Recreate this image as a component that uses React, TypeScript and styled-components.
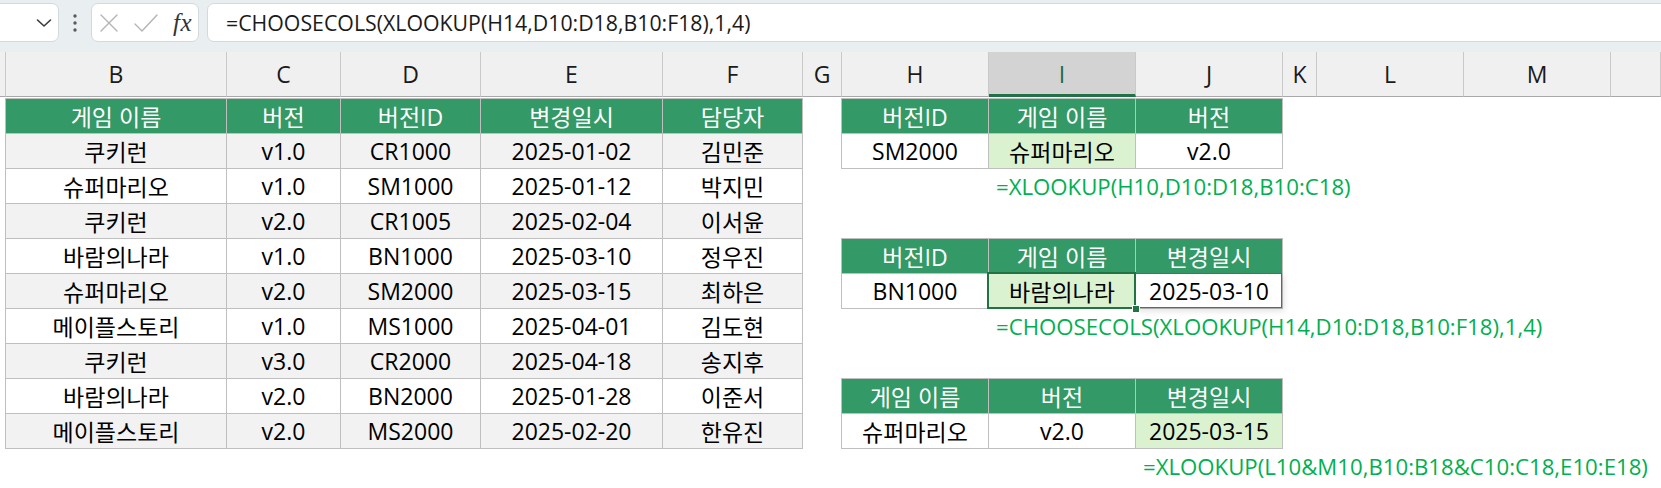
import React from 'react';
import styled, { createGlobalStyle, css } from 'styled-components';

const GlobalStyle = createGlobalStyle`
  html, body { margin: 0; padding: 0; background: #ffffff; }
  body {
    width: 1661px;
    height: 488px;
    overflow: hidden;
    font-family: "Open Sans", "Noto Sans CJK KR", sans-serif;
  }
`;

const COL_WIDTHS = [6, 221, 114, 140, 182, 140, 39, 147, 147, 147, 34, 147, 147];
const TEMPLATE = COL_WIDTHS.map((w) => `${w}px`).join(' ') + ' 1fr';
const LETTERS = ['', 'B', 'C', 'D', 'E', 'F', 'G', 'H', 'I', 'J', 'K', 'L', 'M', ''];
const SELECTED_LETTER = 'I';

/* ---------- formula bar ---------- */

const Bar = styled.div`
  display: flex;
  align-items: flex-start;
  height: 52px;
  box-sizing: border-box;
  padding-top: 3px;
  background: #e9eef1;
  overflow: hidden;
`;

const boxLook = css`
  height: 39px;
  box-sizing: border-box;
  background: #ffffff;
  border: 1px solid #d4d9dd;
  border-radius: 7px;
`;

const NameBox = styled.div`
  ${boxLook};
  flex: none;
  width: 72px;
  margin-left: -13px;
  display: flex;
  align-items: center;
  justify-content: flex-end;
  padding-right: 6px;
  color: #3a3a3a;
`;

const Kebab = styled.div`
  flex: none;
  width: 32px;
  height: 39px;
  display: flex;
  align-items: center;
  justify-content: center;
  color: #5a5a5a;
`;

const FxBox = styled.div`
  ${boxLook};
  flex: none;
  width: 108px;
  display: flex;
  align-items: center;
  padding-left: 7px;
  gap: 14px;
  color: #b4b4b4;
`;

const FxLabel = styled.span`
  font-family: "Liberation Serif", "DejaVu Serif", serif;
  font-style: italic;
  font-size: 25px;
  color: #333333;
  line-height: 1;
  letter-spacing: 0.5px;
`;

const FormulaInput = styled.div`
  ${boxLook};
  flex: 1;
  margin-left: 8px;
  margin-right: -12px;
  display: flex;
  align-items: center;
  padding-left: 18px;
  font-size: 21.3px;
  color: #1a1a1a;
  white-space: nowrap;
`;

/* ---------- column headers ---------- */

const HeaderRow = styled.div`
  display: grid;
  grid-template-columns: ${TEMPLATE};
  height: 45px;
`;

const ColHead = styled.div<{ $sel?: boolean }>`
  display: flex;
  align-items: center;
  justify-content: center;
  box-sizing: border-box;
  border-right: 1px solid #c9c9c9;
  border-bottom: ${(p) => (p.$sel ? '3px solid #217346' : '1px solid #a9a9a9')};
  padding-top: ${(p) => (p.$sel ? '2px' : '0')};
  background: ${(p) => (p.$sel ? '#d3d3d3' : '#f0f0f0')};
  color: ${(p) => (p.$sel ? '#1e6b41' : '#1a1a1a')};
  font-size: 23px;
`;

/* ---------- sheet ---------- */

const Sheet = styled.div`
  display: grid;
  grid-template-columns: ${TEMPLATE};
  grid-auto-rows: 35px;
  padding-top: 2px;
`;

type Tone = 'head' | 'band' | 'plain' | 'hl';
const TONE_BG: Record<Tone, string> = {
  head: '#339966',
  band: '#f2f2f2',
  plain: '#ffffff',
  hl: '#daf2d0',
};

const Cell = styled.div<{ $c: number; $r: number; $tone: Tone; $selected?: boolean; $spill?: boolean }>`
  grid-column: ${(p) => p.$c};
  grid-row: ${(p) => p.$r};
  position: relative;
  display: flex;
  align-items: center;
  justify-content: center;
  box-sizing: border-box;
  border-right: 1px solid #bfbfbf;
  border-bottom: 1px solid #bfbfbf;
  box-shadow: -1px -1px 0 #bfbfbf, -1px 0 0 #bfbfbf, 0 -1px 0 #bfbfbf;
  background: ${(p) => TONE_BG[p.$tone]};
  color: ${(p) => (p.$tone === 'head' ? '#ffffff' : '#000000')};
  font-size: 23px;
  white-space: nowrap;

  ${(p) =>
    p.$selected &&
    css`
      &::after {
        content: '';
        position: absolute;
        top: -2px;
        left: -2px;
        right: -1px;
        bottom: -1px;
        border: 2px solid #217346;
        z-index: 2;
        pointer-events: none;
      }
      &::before {
        content: '';
        position: absolute;
        right: -5px;
        bottom: -5px;
        width: 6px;
        height: 6px;
        background: #217346;
        border: 1px solid #ffffff;
        z-index: 3;
      }
    `}

  ${(p) =>
    p.$spill &&
    css`
      &::after {
        content: '';
        position: absolute;
        top: -1px;
        left: -1px;
        right: 0;
        bottom: 0;
        border: 1px solid #2e6bd2;
        box-shadow: 2px 3px 6px rgba(0, 0, 0, 0.12);
        z-index: 1;
        pointer-events: none;
      }
    `}
`;

const FormulaNote = styled.div<{ $c: number; $r: number }>`
  grid-column: ${(p) => p.$c} / -1;
  grid-row: ${(p) => p.$r};
  display: flex;
  align-items: flex-end;
  padding-left: 7px;
  padding-bottom: 2px;
  color: #00b050;
  font-size: 22.2px;
  line-height: 30px;
  white-space: nowrap;
`;

/* ---------- icons ---------- */

const Chevron = () => (
  <svg width="16" height="10" viewBox="0 0 16 10" fill="none">
    <polyline points="1.5,2 8,8 14.5,2" stroke="currentColor" strokeWidth="1.6" strokeLinejoin="round" strokeLinecap="round" />
  </svg>
);

const Dots = () => (
  <svg width="6" height="20" viewBox="0 0 6 20">
    <circle cx="3" cy="3" r="1.7" fill="currentColor" />
    <circle cx="3" cy="10" r="1.7" fill="currentColor" />
    <circle cx="3" cy="17" r="1.7" fill="currentColor" />
  </svg>
);

const Cross = () => (
  <svg width="20" height="20" viewBox="0 0 20 20" fill="none">
    <path d="M2 2 L18 18 M18 2 L2 18" stroke="currentColor" strokeWidth="1.4" strokeLinecap="round" />
  </svg>
);

const Tick = () => (
  <svg width="26" height="20" viewBox="0 0 26 20" fill="none">
    <path d="M2 11 L9 18 L24 2" stroke="currentColor" strokeWidth="1.4" strokeLinecap="round" strokeLinejoin="round" />
  </svg>
);

/* ---------- data ---------- */

const MAIN_HEAD = ['게임 이름', '버전', '버전ID', '변경일시', '담당자'];
const MAIN_ROWS = [
  ['쿠키런', 'v1.0', 'CR1000', '2025-01-02', '김민준'],
  ['슈퍼마리오', 'v1.0', 'SM1000', '2025-01-12', '박지민'],
  ['쿠키런', 'v2.0', 'CR1005', '2025-02-04', '이서윤'],
  ['바람의나라', 'v1.0', 'BN1000', '2025-03-10', '정우진'],
  ['슈퍼마리오', 'v2.0', 'SM2000', '2025-03-15', '최하은'],
  ['메이플스토리', 'v1.0', 'MS1000', '2025-04-01', '김도현'],
  ['쿠키런', 'v3.0', 'CR2000', '2025-04-18', '송지후'],
  ['바람의나라', 'v2.0', 'BN2000', '2025-01-28', '이준서'],
  ['메이플스토리', 'v2.0', 'MS2000', '2025-02-20', '한유진'],
];

type Mark = 'hl' | 'sel' | 'spill' | undefined;
interface Lookup {
  row: number;
  head: string[];
  data: string[];
  marks: Mark[];
  formula: string;
  formulaCol: number;
}

const LOOKUPS: Lookup[] = [
  {
    row: 1,
    head: ['버전ID', '게임 이름', '버전'],
    data: ['SM2000', '슈퍼마리오', 'v2.0'],
    marks: [undefined, 'hl', undefined],
    formula: '=XLOOKUP(H10,D10:D18,B10:C18)',
    formulaCol: 9,
  },
  {
    row: 5,
    head: ['버전ID', '게임 이름', '변경일시'],
    data: ['BN1000', '바람의나라', '2025-03-10'],
    marks: [undefined, 'sel', 'spill'],
    formula: '=CHOOSECOLS(XLOOKUP(H14,D10:D18,B10:F18),1,4)',
    formulaCol: 9,
  },
  {
    row: 9,
    head: ['게임 이름', '버전', '변경일시'],
    data: ['슈퍼마리오', 'v2.0', '2025-03-15'],
    marks: [undefined, undefined, 'hl'],
    formula: '=XLOOKUP(L10&M10,B10:B18&C10:C18,E10:E18)',
    formulaCol: 10,
  },
];

export default function App() {
  return (
    <>
      <GlobalStyle />
      <Bar>
        <NameBox>
          <Chevron />
        </NameBox>
        <Kebab>
          <Dots />
        </Kebab>
        <FxBox>
          <Cross />
          <Tick />
          <FxLabel>fx</FxLabel>
        </FxBox>
        <FormulaInput>=CHOOSECOLS(XLOOKUP(H14,D10:D18,B10:F18),1,4)</FormulaInput>
      </Bar>

      <HeaderRow>
        {LETTERS.map((l, i) => (
          <ColHead key={i} $sel={l === SELECTED_LETTER}>
            {l}
          </ColHead>
        ))}
      </HeaderRow>

      <Sheet>
        {MAIN_HEAD.map((h, i) => (
          <Cell key={`mh${i}`} $c={i + 2} $r={1} $tone="head">
            {h}
          </Cell>
        ))}
        {MAIN_ROWS.map((row, r) =>
          row.map((v, i) => (
            <Cell key={`m${r}-${i}`} $c={i + 2} $r={r + 2} $tone={r % 2 === 0 ? 'band' : 'plain'}>
              {v}
            </Cell>
          )),
        )}
        {LOOKUPS.map((t, ti) => (
          <React.Fragment key={`t${ti}`}>
            {t.head.map((h, i) => (
              <Cell key={`h${i}`} $c={i + 8} $r={t.row} $tone="head">
                {h}
              </Cell>
            ))}
            {t.data.map((v, i) => {
              const m = t.marks[i];
              return (
                <Cell
                  key={`d${i}`}
                  $c={i + 8}
                  $r={t.row + 1}
                  $tone={m === 'hl' || m === 'sel' ? 'hl' : 'plain'}
                  $selected={m === 'sel'}
                  $spill={m === 'spill'}
                >
                  {v}
                </Cell>
              );
            })}
            <FormulaNote $c={t.formulaCol} $r={t.row + 2}>
              {t.formula}
            </FormulaNote>
          </React.Fragment>
        ))}
      </Sheet>
    </>
  );
}
